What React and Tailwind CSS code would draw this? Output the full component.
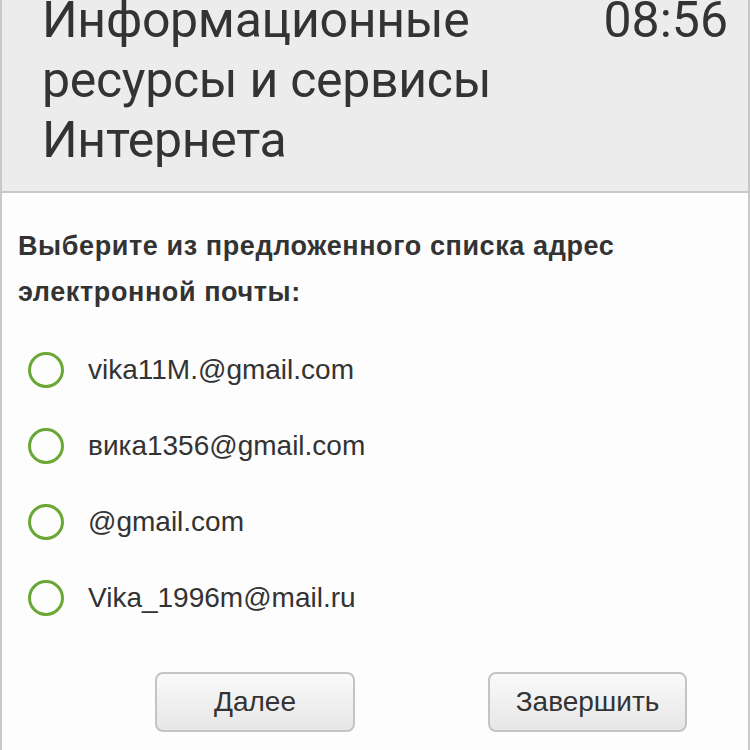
const options = [
  'vika11M.@gmail.com',
  'вика1356@gmail.com',
  '@gmail.com',
  'Vika_1996m@mail.ru',
]

export default function App() {
  return (
    <div className="h-[750px] w-[750px] overflow-hidden border-x-2 border-[#c8c8c8] bg-[#fdfdfd] text-[#333]">
      <header className="flex h-[193px] justify-between border-b-2 border-[#c8c8c8] bg-[#ececec] pl-[40px] pr-[20px]">
        <h1 className="-mt-[10px] font-['Roboto',sans-serif] text-[50px] leading-[60px] tracking-[-0.3px]">
          Информационные
          <br />
          ресурсы и сервисы
          <br />
          Интернета
        </h1>
        <div className="-mt-[10px] font-['Roboto',sans-serif] text-[50px] leading-[60px]">08:56</div>
      </header>

      <main className="px-[16px] pt-[30px] font-['Liberation_Sans',Arial,sans-serif]">
        <p className="text-[27px] font-bold leading-[46px] tracking-[0.6px]">
          Выберите из предложенного списка адрес
          <br />
          электронной почты:
        </p>

        <ul className="mt-[37px] flex flex-col gap-[40px]">
          {options.map((o) => (
            <li key={o} className="flex h-[36px] items-center">
              <span className="ml-[10px] h-[36px] w-[36px] shrink-0 rounded-full border-[3px] border-[#6aa736]" />
              <span className="ml-[24px] text-[28px]">{o}</span>
            </li>
          ))}
        </ul>

        <div className="mt-[56px] flex">
          <button className="ml-[137px] h-[60px] w-[200px] rounded-[8px] border-2 border-[#c4c4c4] bg-gradient-to-b from-[#fafafa] to-[#e6e6e6] text-[28px]">
            Далее
          </button>
          <button className="ml-[133px] h-[60px] w-[199px] rounded-[8px] border-2 border-[#c4c4c4] bg-gradient-to-b from-[#fafafa] to-[#e6e6e6] text-[28px]">
            Завершить
          </button>
        </div>
      </main>
    </div>
  )
}
